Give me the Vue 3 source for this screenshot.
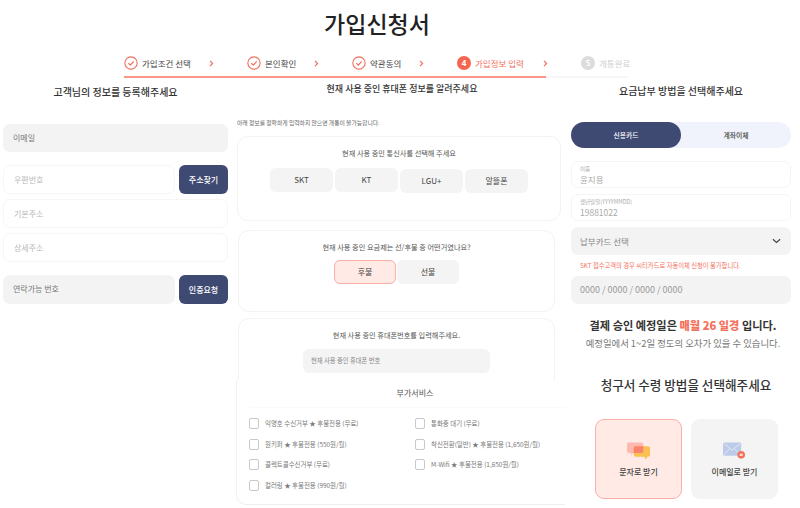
<script setup>
const steps = [
  { label: '가입조건 선택', state: 'done', width: 123 },
  { label: '본인확인', state: 'done', width: 105 },
  { label: '약관동의', state: 'done', width: 105 },
  { label: '가입정보 입력', state: 'current', num: 4, width: 124 },
  { label: '개통완료', state: 'todo', num: 5, width: 60 }
]
const carriers = ['SKT', 'KT', 'LGU+', '알뜰폰']
const services = [
  '익명호 수신거부 ★ 후불전용 (무료)',
  '통화중 대기 (무료)',
  '원키퍼 ★ 후불전용 (550원/월)',
  '착신전환(일반) ★ 후불전용 (1,650원/월)',
  '콜렉트콜수신거부 (무료)',
  'M-Wifi ★ 후불전용 (1,650원/월)',
  '컬러링 ★ 후불전용 (990원/월)'
]
</script>

<template>
  <div class="page">
    <h1 class="title">가입신청서</h1>

    <div class="stepper">
      <div
        v-for="(s, i) in steps"
        :key="s.label"
        class="step"
        :class="s.state"
        :style="{ width: s.width + 'px' }"
      >
        <svg v-if="s.state === 'done'" class="ic" viewBox="0 0 15 15">
          <circle cx="7.5" cy="7.5" r="6.6" fill="none" stroke="#f0705f" stroke-width="1.2" />
          <path d="M4.6 7.6l2.1 2.1 3.7-3.9" fill="none" stroke="#f0705f" stroke-width="1.3" />
        </svg>
        <span v-else class="num">{{ s.num }}</span>
        <span class="step-label">{{ s.label }}</span>
        <svg v-if="i < 4" class="arrow" viewBox="0 0 5 7">
          <path d="M1 .8l2.6 2.7L1 6.2" fill="none" stroke="#f0705f" stroke-width="1.2" />
        </svg>
      </div>
    </div>
    <div class="track"><div class="track-fill"></div></div>

    <div class="cols">
      <section class="col-left">
        <h2 class="head head-left">고객님의 정보를 등록해주세요</h2>
        <div class="field grey email">이메일</div>
        <div class="row post">
          <div class="field line grow">우편번호</div>
          <button class="navy">주소찾기</button>
        </div>
        <div class="field line gap5">기본주소</div>
        <div class="field line gap5">상세주소</div>
        <div class="row phone">
          <div class="field grey grow">연락가능 번호</div>
          <button class="navy">인증요청</button>
        </div>
      </section>

      <section class="col-mid">
        <h2 class="head head-mid">현재 사용 중인 휴대폰 정보를 알려주세요</h2>
        <p class="note">아래 정보를 정확하게 입력하지 않으면 개통이 불가능합니다.</p>

        <div class="card card1">
          <p class="card-title">현재 사용 중인 통신사를 선택해 주세요</p>
          <div class="choices">
            <span v-for="c in carriers" :key="c" class="choice carrier">{{ c }}</span>
          </div>
        </div>

        <div class="card card2">
          <p class="card-title">현재 사용 중인 요금제는 선/후불 중 어떤거였나요?</p>
          <div class="choices tight">
            <span class="choice on">후불</span>
            <span class="choice">선불</span>
          </div>
        </div>

        <div class="card card3">
          <p class="card-title">현재 사용 중인 휴대폰번호를 입력해주세요.</p>
          <div class="phone-input">현재 사용 중인 휴대폰 번호</div>
        </div>

        <div class="extras">
          <h3 class="extras-title">부가서비스</h3>
          <div class="extras-grid">
            <label v-for="s in services" :key="s" class="svc">
              <span class="box"></span>
              <span>{{ s }}</span>
            </label>
          </div>
        </div>
      </section>

      <section class="col-right">
        <h2 class="head head-right">요금납부 방법을 선택해주세요</h2>
        <div class="toggle">
          <span class="tab active">신용카드</span>
          <span class="tab">계좌이체</span>
        </div>
        <div class="labeled first">
          <small>이름</small>
          <span>윤지용</span>
        </div>
        <div class="labeled">
          <small>생년월일(YYYYMMDD)</small>
          <span>19881022</span>
        </div>
        <div class="select">
          <span>납부카드 선택</span>
          <svg class="chev" viewBox="0 0 10 6">
            <path d="M1 1l4 3.6L9 1" fill="none" stroke="#444" stroke-width="1.3" />
          </svg>
        </div>
        <p class="warn">SKT 접수고객의 경우 씨티카드로 자동이체 신청이 불가합니다.</p>
        <div class="cardnum">0000 / 0000 / 0000 / 0000</div>
        <p class="due">결제 승인 예정일은 <b>매월 26 일경</b> 입니다.</p>
        <p class="due-sub">예정일에서 1~2일 정도의 오차가 있을 수 있습니다.</p>
        <h2 class="bill-head">청구서 수령 방법을 선택해주세요</h2>
        <div class="bills">
          <div class="bill sel">
            <svg class="bill-ic" viewBox="0 0 24 18">
              <path d="M2 0h13a2 2 0 0 1 2 2v7a2 2 0 0 1-2 2H6l-1 3-1-3H2a2 2 0 0 1-2-2V2a2 2 0 0 1 2-2z" fill="#fdb9b0" />
              <path d="M9 4h13a2 2 0 0 1 2 2v7a2 2 0 0 1-2 2h-1l-1 3-2-3H9a2 2 0 0 1-2-2V6a2 2 0 0 1 2-2z" fill="#fbc04f" />
              <path d="M9 4h8v5a2 2 0 0 1-2 2H7V6a2 2 0 0 1 2-2z" fill="#f8836f" />
            </svg>
            <span>문자로 받기</span>
          </div>
          <div class="bill">
            <svg class="bill-ic" viewBox="0 0 24 18">
              <rect x="0" y="0" width="19" height="14" rx="1.5" fill="#bccbe8" />
              <path d="M.5.8L9.5 8l9-7.2M.5 13.3l6.5-6.5M18.5 13.3L12 6.8" fill="none" stroke="#e6ecf8" stroke-width=".9" />
              <circle cx="19" cy="13" r="4" fill="#f4735f" />
              <rect x="17.5" y="11.8" width="3" height="2.4" fill="#fde0db" />
            </svg>
            <span>이메일로 받기</span>
          </div>
        </div>
      </section>
    </div>
  </div>
</template>

<style scoped>
.page {
  width: 800px;
  height: 508px;
  overflow: hidden;
  background: #fff;
  color: #333;
  font-family: "Noto Sans CJK KR", "Noto Sans", sans-serif;
}
h1, h2, h3, p { margin: 0; font-weight: 500; }
.title {
  width: 754px;
  height: 50px;
  line-height: 47px;
  text-align: center;
  font-size: 23px;
  color: #222;
}
.stepper {
  display: flex;
  align-items: center;
  height: 26px;
  margin-left: 124px;
}
.step {
  display: flex;
  align-items: center;
  flex: none;
  position: relative;
  font-size: 8.5px;
  color: #444;
}
.ic { width: 14px; height: 14px; flex: none; }
.num {
  width: 14px;
  height: 14px;
  flex: none;
  border-radius: 50%;
  background: #f4664f;
  color: #fff;
  font-size: 8px;
  font-weight: 700;
  line-height: 14px;
  text-align: center;
}
.step-label { margin-left: 4px; white-space: nowrap; }
.current .step-label { color: #f4715d; }
.todo .num { background: #dcdcdc; }
.todo .step-label { color: #cfcfcf; }
.arrow { width: 5px; height: 7px; position: absolute; right: 33px; top: 50%; margin-top: -3.5px; }
.track {
  width: 504px;
  height: 2px;
  margin-left: 124px;
  background: #f6f6f6;
}
.track-fill { width: 422px; height: 2px; background: #f99788; }

.cols { display: flex; padding: 2px 0 0 3px; }
.col-left { width: 225px; flex: none; }
.col-mid { width: 329px; margin-left: 8px; flex: none; }
.col-right { width: 220px; margin-left: 6px; flex: none; }

.head { font-size: 10px; text-align: center; color: #333; }
.head-left { height: 24px; line-height: 24px; }
.head-mid { height: 18px; line-height: 18px; width: 326px; margin-left: 3px; font-size: 9px; }
.head-right { height: 22px; line-height: 22px; }

.field {
  height: 29px;
  line-height: 28px;
  padding-left: 10px;
  box-sizing: border-box;
  border-radius: 7px;
  font-size: 8px;
}
.grey { background: #f3f3f3; color: #777; }
.line { border: 1px solid #f6f6f6; color: #b8b8b8; }
.email { margin-top: 20px; height: 28px; }
.row { display: flex; gap: 4px; }
.grow { flex: 1; }
.post { margin-top: 13px; }
.phone { margin-top: 13px; }
.gap5 { margin-top: 5px; }
.navy {
  width: 49px;
  height: 29px;
  padding: 0;
  border: 0;
  border-radius: 6px;
  background: #3f4a73;
  color: #fff;
  font: 500 8px "Noto Sans CJK KR", sans-serif;
}

.note { margin-top: 21px; height: 8px; line-height: 8px; font-size: 5.8px; font-weight: 400; color: #666; margin-left: 1px; }
.card {
  box-sizing: border-box;
  border: 1px solid #f3f3f3;
  border-radius: 11px;
  background: #fff;
  text-align: center;
}
.card-title { font-size: 7.2px; font-weight: 400; line-height: 12px; color: #555; }
.card1 { width: 324px; height: 85px; margin: 9px 0 0 1px; padding-top: 10px; }
.card2 { width: 317px; height: 82px; margin: 9px 0 0 2px; padding-top: 10px; }
.card3 { width: 317px; height: 85px; margin: 6px 0 0 2px; padding-top: 10px; }
.choices { display: flex; gap: 2px; margin: 9px 0 0 32px; }
.tight { margin: 7px 0 0 95px; }
.choice {
  width: 63px;
  height: 24px;
  line-height: 24px;
  border-radius: 6px;
  background: #f4f4f4;
  font-size: 8px;
  color: #444;
  box-sizing: border-box;
  flex: none;
}
.carrier:nth-child(n + 3) { margin-top: 1px; }
.tight .choice { width: 62px; margin-right: -1px; }
.on { background: #ffeae6; border: 1px solid #fbb0a5; line-height: 22px; }
.phone-input {
  width: 187px;
  height: 24px;
  margin: 8px 0 0 64px;
  padding-left: 8px;
  box-sizing: border-box;
  line-height: 24px;
  border-radius: 6px;
  background: #f4f4f4;
  font-size: 6.3px;
  color: #888;
  text-align: left;
}

.extras {
  position: relative;
  width: 329px;
  height: 125px;
  margin-top: -23px;
  box-sizing: border-box;
  padding-left: 12px;
  background: #fff;
  border-left: 1px solid #f2f2f2;
  border-bottom: 1px solid #eee;
  border-radius: 0 0 0 10px;
}
.extras-title {
  height: 28px;
  line-height: 26px;
  padding-left: 16px;
  box-sizing: border-box;
  font-size: 8px;
  font-weight: 400;
  text-align: center;
  color: #555;
  border-bottom: 1px solid #fafafa;
}
.extras-grid {
  display: grid;
  grid-template-columns: 166px 1fr;
  grid-auto-rows: 20.7px;
  padding-top: 5px;
}
.svc {
  display: flex;
  align-items: center;
  gap: 6px;
  font-size: 6.45px;
  color: #777;
  white-space: nowrap;
}
.box {
  width: 10px;
  height: 11px;
  box-sizing: border-box;
  border: 1px solid #c9c9c9;
  border-radius: 2px;
  flex: none;
}

.toggle {
  display: flex;
  height: 26px;
  margin-top: 20px;
  border-radius: 13px;
  background: #f0f3fb;
}
.tab {
  width: 110px;
  line-height: 26px;
  text-align: center;
  font-size: 6.8px;
  font-weight: 500;
  color: #444;
}
.active { background: #3f4a73; color: #fff; border-radius: 13px; }
.labeled {
  height: 27px;
  margin-top: 6px;
  padding: 3px 0 0 8px;
  box-sizing: border-box;
  border: 1px solid #f5f5f5;
  border-radius: 7px;
  display: flex;
  flex-direction: column;
  color: #aaa;
}
.labeled.first { margin-top: 13px; }
.labeled small { font-size: 5.5px; line-height: 8px; }
.labeled span { font-size: 8.5px; line-height: 12px; }
.select {
  display: flex;
  align-items: center;
  justify-content: space-between;
  height: 28px;
  margin-top: 6px;
  padding: 0 10px 0 9px;
  border-radius: 7px;
  background: #f3f3f3;
  font-size: 8.5px;
  color: #888;
}
.chev { width: 9px; height: 6px; }
.warn { margin-top: 3px; height: 18px; line-height: 16px; padding-left: 9px; font-size: 6.3px; font-weight: 400; color: #f4715d; white-space: nowrap; }
.cardnum {
  height: 28px;
  line-height: 28px;
  padding-left: 9px;
  border-radius: 7px;
  background: #f3f3f3;
  font-size: 9px;
  color: #999;
}
.due { margin-top: 12px; padding-left: 4px; line-height: 18px; text-align: center; font-size: 11.2px; font-weight: 700; color: #333; white-space: nowrap; }
.due b { color: #f4715d; }
.due-sub { padding-left: 4px; line-height: 18px; text-align: center; font-size: 9.4px; font-weight: 400; color: #777; white-space: nowrap; }
.bill-head { margin-top: 23px; padding-left: 10px; height: 20px; line-height: 20px; text-align: center; font-size: 12.6px; font-weight: 500; color: #333; white-space: nowrap; }
.bills { display: flex; gap: 9px; margin: 24px 0 0 24px; }
.bill {
  width: 87px;
  height: 80px;
  box-sizing: border-box;
  border-radius: 9px;
  background: #f4f4f4;
  display: flex;
  flex-direction: column;
  align-items: center;
  padding-top: 23px;
  font-size: 8px;
  font-weight: 500;
  color: #444;
}
.sel { background: #ffeae6; border: 1px solid #fbb0a5; padding-top: 22px; }
.bill-ic { width: 23px; height: 18px; margin-bottom: 6px; }
</style>
